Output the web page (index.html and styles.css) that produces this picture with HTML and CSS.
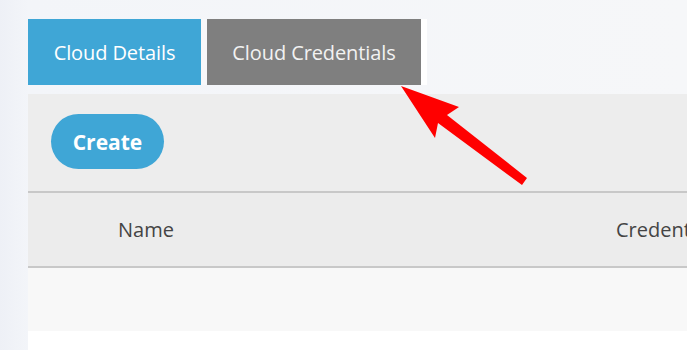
FILE: index.html
```html
<!DOCTYPE html>
<html lang="en">
<head>
  <meta charset="UTF-8" />
  <title>Cloud Credentials</title>
  <link rel="stylesheet" href="styles.css">
</head>
<body>
<div class="page">
  <div class="tabs">
    <a class="tab tab-active" href="#">Cloud Details</a>
    <a class="tab tab-selected" href="#">Cloud Credentials</a>
  </div>
  <div class="panel">
    <div class="toolbar">
      <button class="create-btn">Create</button>
    </div>
    <div class="table-head">
      <div class="col col-name">Name</div>
      <div class="col col-cred">Credentials</div>
    </div>
    <div class="table-row"></div>
    <div class="table-foot"></div>
  </div>
  <svg class="arrow" width="140" height="110" viewBox="0 0 140 110">
    <polygon points="1,1 59,22 47,30 127,93 122,100 38,38 35,53" fill="#ff0000"/>
  </svg>
</div>
</body>
</html>
```

FILE: styles.css
```css
* { box-sizing: border-box; }
body { margin:0; font-family:'Open Sans',sans-serif; background:linear-gradient(90deg,#eef0f6 0,#f3f5f9 28px,#f6f7f9 100%); color:#444; overflow:hidden; }
.page { position:relative; height:350px; padding:19px 0 0 28px; overflow:hidden; }
.tabs { display:flex; width:399px; height:66px; background:#f8f8fa; }
.tab { display:flex; align-items:center; justify-content:center; height:66px; color:#fff; text-decoration:none; font-size:20px; letter-spacing:-0.1px; }
.tab-active { width:173px; background:#3fa6d6; margin-right:6px; }
.tab-selected { width:220px; background:#7f7f7f; color:#f2f2f2; border-right:6px solid #fff; }
.panel { margin-top:9px; background:#ededed; }
.toolbar { height:99px; padding:20px 0 0 23px; border-bottom:2px solid #c8c8c8; }
.create-btn { width:113px; height:55px; border:none; border-radius:28px; background:#3fa6d6; color:#fff; font-family:'Open Sans',sans-serif; font-weight:700; font-size:21px; }
.table-head { display:flex; height:75px; align-items:center; background:#ececec; border-bottom:2px solid #c8c8c8; font-size:20px; white-space:nowrap; overflow:hidden; }
.col { flex:none; }
.col-name { margin-left:90px; width:498px; }
.table-row { height:63px; background:#f8f8f8; }
.table-foot { height:19px; background:#fff; }
.arrow { position:absolute; left:400px; top:85px; }
```
